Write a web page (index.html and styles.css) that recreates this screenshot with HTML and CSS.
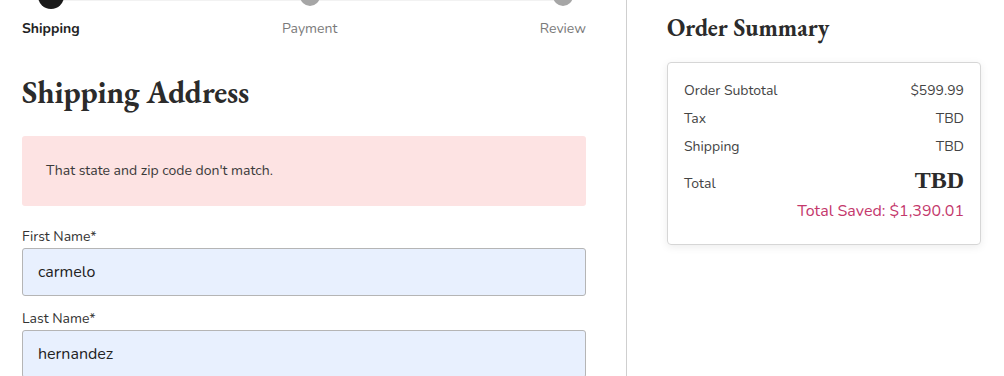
FILE: index.html
```html
<!DOCTYPE html>
<html lang="en">
<head>
    <meta charset="UTF-8">
    <title>Checkout</title>
    <link rel="stylesheet" href="styles.css">
</head>
<body>
<div class="page">
    <div class="main">
        <div class="steps">
            <div class="step done">
                <span class="dot">1</span>
                <span class="step-name">Shipping</span>
            </div>
            <div class="step">
                <span class="dot"></span>
                <span class="step-name">Payment</span>
            </div>
            <div class="step">
                <span class="dot"></span>
                <span class="step-name">Review</span>
            </div>
        </div>

        <h1 class="title">Shipping Address</h1>

        <div class="alert">That state and zip code don't match.</div>

        <label class="field">
            <span class="field-label">First Name*</span>
            <input class="input" type="text" value="carmelo">
        </label>
        <label class="field">
            <span class="field-label">Last Name*</span>
            <input class="input" type="text" value="hernandez">
        </label>
    </div>

    <div class="side">
        <h2 class="side-title">Order Summary</h2>
        <div class="card">
            <div class="row"><span>Order Subtotal</span><span>$599.99</span></div>
            <div class="row"><span>Tax</span><span>TBD</span></div>
            <div class="row"><span>Shipping</span><span>TBD</span></div>
            <div class="row total"><span>Total</span><span class="big">TBD</span></div>
            <div class="saved">Total Saved: $1,390.01</div>
        </div>
    </div>
</div>
</body>
</html>
```

FILE: styles.css
```css
html,body{margin:0;padding:0;background:#fff;}
body{font-family:"Nunito",Lato,"Noto Sans",sans-serif;color:#333;overflow:hidden;}
.page{display:flex;height:376px;}
.main{width:564px;padding:0 40px 0 22px;border-right:1px solid #cfcfcf;}
.side{flex:1;padding:0 0 0 40px;}

.steps{display:flex;justify-content:space-between;position:relative;margin-top:-17px;}
.steps:before{content:"";position:absolute;left:30px;right:22px;top:8px;height:10px;background:#f2f2f2;}
.step{display:flex;flex-direction:column;align-items:center;position:relative;}
.dot{width:20px;height:20px;border-radius:50%;background:#a6a6a6;margin-top:3px;margin-bottom:13px;font-size:0;}
.done .dot{width:26px;height:26px;margin-top:0;margin-bottom:10px;background:#1a1a1a;color:#fff;font-size:14px;font-weight:bold;text-align:center;line-height:26px;}
.step-name{font-size:14px;line-height:20px;color:#7a7a7a;}
.done .step-name{color:#222;font-weight:bold;}

.title{font-family:"EB Garamond","Liberation Serif",serif;font-size:31px;font-weight:bold;color:#2b2b2b;margin:35px 0 26px;line-height:36px;letter-spacing:-0.1px;}

.alert{background:#fde3e3;border-radius:3px;padding:25px 24px;font-size:14px;line-height:20px;color:#3a3a3a;margin-bottom:21px;}

.field{display:block;margin-bottom:13px;}
.field-label{display:block;font-size:14px;line-height:20px;color:#333;margin-bottom:1px;}
.input{display:block;box-sizing:border-box;width:100%;height:48px;border:1px solid #b5b5b5;border-radius:3px;background:#e8f0fe;padding:0 15px;font-family:inherit;font-size:16px;color:#222;outline:none;}

.side-title{font-family:"EB Garamond","Liberation Serif",serif;font-size:24px;font-weight:bold;color:#2b2b2b;margin:12px 0 18px;line-height:32px;}
.card{width:280px;border:1px solid #d6d6d6;border-radius:4px;box-shadow:0 2px 8px rgba(0,0,0,0.08);padding:18px 16px 22px;}
.row{display:flex;justify-content:space-between;align-items:baseline;font-size:14px;line-height:20px;color:#444;margin-bottom:8px;}
.row.total{margin-top:10px;margin-bottom:6px;}
.big{font-family:"Liberation Serif",serif;font-size:24px;font-weight:bold;color:#2b2b2b;line-height:26px;}
.saved{text-align:right;font-size:16px;line-height:22px;color:#c4386c;}
```
